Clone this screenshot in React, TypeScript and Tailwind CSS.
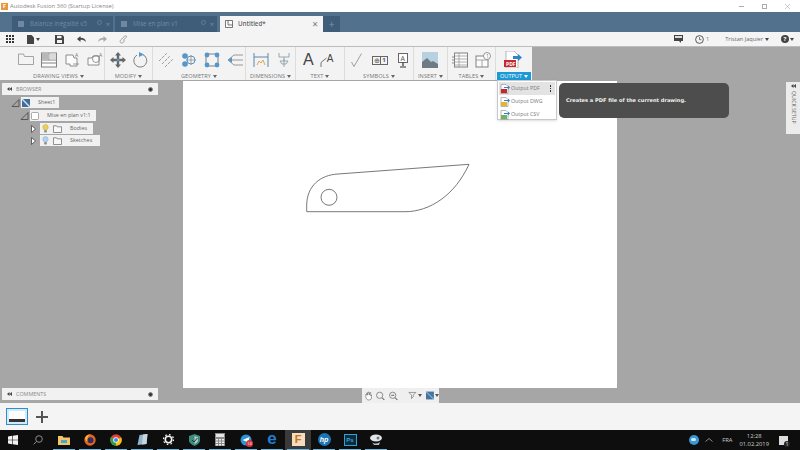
import React from "react";

const font = "font-['Open_Sans','Liberation_Sans',sans-serif]";

// ribbon tools are small drawings, all on a 16x16 box
const Svg = ({ w = 16, h = 16, children }: { w?: number; h?: number; children: React.ReactNode }) => (
    <svg width={w} height={h} viewBox={`0 0 ${w} ${h}`} fill="none" className="block shrink-0 opacity-80">
        {children}
    </svg>
);

const Caret = ({ color = "#555" }: { color?: string }) => (
    <svg width="4" height="3" viewBox="0 0 4 3" className="shrink-0"><path d="M0 0h4L2 3z" fill={color} /></svg>
);

const RibbonGroup = ({ label, width, gap, pl, children, labelPl = "" }: { label: string; width: string; gap: string; pl: string; children?: React.ReactNode; labelPl?: string }) => (
    <div className={`${width} flex flex-col h-full border-r border-[#dcdcdc]`}>
        <div className={`h-[25px] flex items-center ${gap} ${pl} pt-[1px]`}>{children}</div>
        <div className={`h-[8px] flex items-center justify-center gap-[2px] text-[5.6px] text-[#777] tracking-[0.1px] ${labelPl}`}>
            {label}
            <Caret color="#666" />
        </div>
    </div>
);

const TreeChip = ({ width, children }: { width: string; children: React.ReactNode }) => (
    <div className={`${width} h-[11px] bg-[#f1f1f1] flex items-center text-[5.4px] text-[#666]`}>{children}</div>
);

const Tri = () => (
    <svg width="5" height="8" viewBox="0 0 5 8"><path d="M.5.5 4.5 4 .5 7.5z" fill="#fff" stroke="#444" strokeWidth=".8" /></svg>
);
const Corner = () => (
    <svg width="9" height="8" viewBox="0 0 9 8"><path d="M8 .5V7.5H1z" fill="none" stroke="#444" strokeWidth=".8" /></svg>
);
const Bulb = ({ color }: { color: string }) => (
    <svg width="7" height="9" viewBox="0 0 7 9"><circle cx="3.5" cy="3.2" r="2.7" fill={color} stroke="#999" strokeWidth=".4" /><rect x="2.2" y="6.2" width="2.6" height="2.2" fill="#888" /></svg>
);
const Folder = () => (
    <svg width="9" height="8" viewBox="0 0 9 8"><path d="M.5 7.5V.8h3l.7 1h4.3v5.7z" fill="#f8f8f8" stroke="#666" strokeWidth=".7" /></svg>
);

const PanelBar = ({ label }: { label: string }) => (
    <div className="h-[12px] w-[156px] ml-[2px] bg-[#f1f1f1] flex items-center pl-[5px] text-[5.4px] text-[#888]">
        <svg width="5" height="4" viewBox="0 0 5 4" className="mr-[4px]"><path d="M2.500 0v4L0 2zM5 0v4L2.500 2z" fill="#444" /></svg>
        {label}
        <span className="ml-auto mr-[5px] w-[5px] h-[5px] rounded-full bg-[#333] border border-[#888]" />
    </div>
);

const MenuRow = ({ label, color, active }: { label: string; color: string; active?: boolean }) => (
    <div className={`h-[13px] mx-[1px] flex items-center pl-[1px] text-[5.3px] text-[#777] ${active ? "bg-[#e3e3e3]" : ""}`}>
        <svg width="10" height="10" viewBox="0 0 10 10" className="mr-[1px]">
            <path d="M1 .5h5l2 2v7H1z" fill="#fff" stroke="#888" strokeWidth=".6" />
            <rect x="1" y="5" width="6" height="4" fill={color} />
            <path d="M4 3h4V1.500L10 3.500 8 5.500V4H4z" fill="#2e86c8" />
        </svg>
        <span>{label}</span>
        {active && (
            <span className="ml-auto mr-[4px] flex flex-col gap-[1px]">
                <i className="block w-[1.500px] h-[1.500px] bg-[#333]" />
                <i className="block w-[1.500px] h-[1.500px] bg-[#333]" />
                <i className="block w-[1.500px] h-[1.500px] bg-[#333]" />
            </span>
        )}
    </div>
);

const TaskIcon = ({ running, active, first, children }: { running?: boolean; active?: boolean; first?: boolean; children: React.ReactNode }) => (
    <div className={`${first ? "w-[25px]" : "w-[26px]"} h-full px-[2px] ${active ? "bg-[#3a3a3a]" : ""}`}>
        <div className={`h-full flex items-center justify-center border-b ${running ? "border-[#6fb6dc]" : "border-transparent"}`}>
            {children}
        </div>
    </div>
);

const taskIcons = (
    <>
        <TaskIcon first>
            <svg width="10" height="10" viewBox="0 0 10 10"><path d="M0 1.400 4.300.8v3.900H0zM4.900.7 10 0v4.700H4.900zM0 5.300h4.300v3.900L0 8.600zM4.900 5.300H10V10l-5.100-.7z" fill="#f2f2f2" /></svg>
        </TaskIcon>
        <TaskIcon>
            <svg width="10" height="10" viewBox="0 0 10 10" fill="none" stroke="#999" strokeWidth=".9"><circle cx="6" cy="4" r="3.300" /><path d="M3.600 6.400 .6 9.400" /></svg>
        </TaskIcon>
        <TaskIcon running>
            <svg width="12" height="10" viewBox="0 0 12 10"><path d="M0 1h4.500l1 1.500H12V10H0z" fill="#f1c664" /><rect x="3" y="5" width="6" height="3" fill="#4aa3d8" /></svg>
        </TaskIcon>
        <TaskIcon running>
            <svg width="12" height="12" viewBox="0 0 12 12"><circle cx="6" cy="6" r="5.700" fill="#e8641b" /><circle cx="6.500" cy="6.300" r="3" fill="#2b2d6e" /><path d="M1 4c1-3 4-4 6-3.500C5 1 4 2.500 4 3.500 3 4 3 6 3.500 7.500 2 7 1 5.500 1 4z" fill="#f7b32b" /></svg>
        </TaskIcon>
        <TaskIcon running>
            <svg width="12" height="12" viewBox="0 0 12 12"><circle cx="6" cy="6" r="5.800" fill="#dc4437" /><path d="M6 6 11.200 3.500A5.800 5.800 0 0 1 6 11.800z" fill="#f4c20d" /><path d="M6 6 6 11.800A5.800 5.800 0 0 1 .9 3.200z" fill="#2f9e44" /><circle cx="6" cy="6" r="2.800" fill="#fff" /><circle cx="6" cy="6" r="2.100" fill="#4285f4" /></svg>
        </TaskIcon>
        <TaskIcon running>
            <svg width="11" height="11" viewBox="0 0 11 11"><path d="M2.500 1 10.500 0 9.500 10 .5 11z" fill="#8fb6cf" /><path d="M6 .5 10.500 0 9.500 10 5 10.500z" fill="#c9d6de" /></svg>
        </TaskIcon>
        <TaskIcon running>
            <svg width="11" height="11" viewBox="0 0 11 11"><circle cx="5.500" cy="5.500" r="3.200" fill="none" stroke="#f2f2f2" strokeWidth="1.600" /><circle cx="5.500" cy="5.500" r="5" fill="none" stroke="#f2f2f2" strokeWidth="1.300" strokeDasharray="1.600 2.320" /></svg>
        </TaskIcon>
        <TaskIcon running>
            <svg width="11" height="12" viewBox="0 0 11 12"><path d="M5.500 0 11 2v4.500C11 9 8 11 5.500 12 3 11 0 9 0 6.500V2z" fill="#3d8c7a" /><path d="M5.500 2 9 3.200v3C9 8 7 9.300 5.500 10z" fill="#b3c7cc" /><path d="M3 6l2 2 3.500-4" stroke="#17374f" strokeWidth="1" fill="none" /></svg>
        </TaskIcon>
        <TaskIcon running>
            <svg width="10" height="13" viewBox="0 0 10 13"><rect width="10" height="13" fill="#8b8b8b" /><rect x="1" y="1" width="8" height="3" fill="#e6e6e6" /><path d="M1 6h2v1.500H1zM4 6h2v1.500H4zM7 6h2v1.500H7zM1 8.500h2V10H1zM4 8.500h2V10H4zM7 8.500h2V10H7zM1 11h2v1.500H1zM4 11h2v1.500H4zM7 11h2v1.500H7z" fill="#eee" /></svg>
        </TaskIcon>
        <TaskIcon running>
            <div className="relative w-[12px] h-[12px]">
                <svg width="12" height="12" viewBox="0 0 12 12"><circle cx="6" cy="6" r="5.500" fill="#2c92d1" /><path d="M2.500 6 9.500 3 8 9 6 7.500z" fill="#fff" /></svg>
                <span className="absolute left-[6px] top-[6px] w-[7px] h-[7px] rounded-full bg-[#d8343f] text-white text-[4px] leading-[7px] text-center">14</span>
            </div>
        </TaskIcon>
        <TaskIcon running>
            <span className="text-[#1f7fd6] text-[17px] leading-none font-bold font-['Liberation_Sans',sans-serif] -mt-[3px]">e</span>
        </TaskIcon>
        <TaskIcon running active>
            <div className="w-[13px] h-[13px] bg-[#f3dcc0] flex items-center justify-center text-[#c8711b] text-[11px] font-bold leading-none font-['Liberation_Sans',sans-serif]">F</div>
        </TaskIcon>
        <TaskIcon running>
            <div className="w-[13px] h-[13px] rounded-full bg-[#1c74b8] flex items-center justify-center text-white text-[7px] italic font-bold leading-none font-['Liberation_Sans',sans-serif]">hp</div>
        </TaskIcon>
        <TaskIcon running>
            <div className="w-[13px] h-[12px] bg-[#0d2b3b] border border-[#2fa3d6] flex items-center justify-center text-[#35a9dc] text-[6px] font-bold leading-none font-['Liberation_Sans',sans-serif]">Ps</div>
        </TaskIcon>
        <TaskIcon running>
            <svg width="14" height="12" viewBox="0 0 14 12"><ellipse cx="7" cy="4" rx="6" ry="3.500" fill="#e5e5e5" /><path d="M3 8c2 2 5 2 8 0l-1 3H5z" fill="#b8c4cc" /><circle cx="9" cy="4" r="1.500" fill="#5a7d99" /></svg>
        </TaskIcon>
    </>
);

export default function App() {
    return (
        <div className={`w-[800px] h-[450px] overflow-hidden flex flex-col bg-white relative ${font}`}>
            {/* Window title */}
            <div className="h-[12px] flex items-center pl-[1px] text-[5.85px] text-[#888]">
                <div className="w-[7px] h-[7px] bg-[#e9963c] text-white text-[6px] leading-[7px] text-center font-bold mr-[2px]">F</div>
                Autodesk Fusion 360 (Startup License)
                <div className="ml-auto flex items-center gap-[18px] pr-[10px] text-[#999]">
                    <i className="block w-[5px] h-[1px] bg-[#aaa]" />
                    <i className="block w-[5px] h-[5px] border border-[#aaa]" />
                    <svg width="5" height="5" viewBox="0 0 5 5"><path d="M0 0 5 5M5 0 0 5" stroke="#aaa" strokeWidth=".6" /></svg>
                </div>
            </div>

            {/* Tabs */}
            <div className="h-[20px] bg-[#52718d] flex items-end pl-[12px] text-[6.2px]">
                <div className="w-[101px] h-[16px] bg-[#3f5d79] flex items-center pl-[6px] text-[#6f8aa3] mr-[2px]">
                    <i className="w-[6px] h-[6px] bg-[#6f889f] mr-[6px]" />
                    Balance inégalité v5
                    <span className="ml-auto mr-[3px] w-[5px] h-[5px] mb-[4px] rounded-full border border-[#5f7d98]" />
                    <span className="mr-[3px] text-[#6f8aa3] text-[8px] leading-none">×</span>
                </div>
                <div className="w-[102px] h-[16px] bg-[#3f5d79] flex items-center pl-[6px] text-[#6f8aa3] mr-[3px]">
                    <i className="w-[6px] h-[6px] bg-[#6f889f] mr-[6px]" />
                    Mise en plan v1
                    <span className="ml-auto mr-[3px] w-[5px] h-[5px] mb-[4px] rounded-full border border-[#5f7d98]" />
                    <span className="mr-[3px] text-[#6f8aa3] text-[8px] leading-none">×</span>
                </div>
                <div className="w-[103px] h-[16px] bg-[#f4f4f4] flex items-center pl-[5px] text-[#666] font-semibold">
                    <svg width="8" height="8" viewBox="0 0 8 8" className="mr-[5px]"><path d="M.5.500h7v7h-7zM3 .5v4.500h4.500" fill="#fff" stroke="#555" strokeWidth=".8" /></svg>
                    Untitled*
                    <span className="ml-auto mr-[5px] text-[#777] text-[10px] leading-none font-normal">×</span>
                </div>
                <div className="w-[17px] h-[16px] bg-[#3f5d79] flex items-center justify-center text-[#7c95ac] text-[10px] leading-none">+</div>
            </div>

            {/* Quick access bar */}
            <div className="h-[15px] bg-[#f4f4f4] border-b border-[#bdbdbd] flex items-center pl-[6px] text-[5.6px] text-[#666]">
                <svg width="8" height="8" viewBox="0 0 8 8" className="mr-[13px]"><path d="M0 0h2v2H0zM3 0h2v2H3zM6 0h2v2H6zM0 3h2v2H0zM3 3h2v2H3zM6 3h2v2H6zM0 6h2v2H0zM3 6h2v2H3zM6 6h2v2H6z" fill="#333" /></svg>
                <svg width="7" height="9" viewBox="0 0 7 9" className="mr-[2px]"><path d="M0 0h4.500L7 2.500V9H0z" fill="#444" /></svg>
                <span className="mr-[15px]"><Caret color="#444" /></span>
                <svg width="9" height="9" viewBox="0 0 9 9" className="mr-[13px]"><path d="M0 0h7.500L9 1.500V9H0z" fill="#444" /><rect x="2" y=".8" width="4.500" height="2.400" fill="#f4f4f4" /><rect x="2" y="5" width="5" height="3" fill="#f4f4f4" /></svg>
                <svg width="9" height="6" viewBox="0 0 9 6" className="mr-[12px]"><path d="M3.500 0v1.800C6.500 1.800 8.500 3 9 6 7.500 4.300 6 3.800 3.500 3.800V6L0 3z" fill="#444" /></svg>
                <svg width="9" height="6" viewBox="0 0 9 6" className="mr-[12px]"><path d="M5.500 0v1.800C2.500 1.800.5 3 0 6c1.500-1.700 3-2.200 5.500-2.200V6L9 3z" fill="#aaa" /></svg>
                <svg width="9" height="9" viewBox="0 0 9 9" fill="none" stroke="#999" strokeWidth=".9"><path d="M4 5.500 7.700 2A1.200 1.200 0 0 0 6 .8L1.500 5.200a1.700 1.700 0 0 0 2.400 2.400L6 5.500" /></svg>
                <div className="ml-auto flex items-center pr-[6px]">
                    <svg width="9" height="8" viewBox="0 0 9 8" className="mr-[12px]"><path d="M0 0h9v6H7v2L5 6H0z" fill="#444" /><rect x="1" y="1" width="7" height="2" fill="#ddd" /></svg>
                    <svg width="9" height="9" viewBox="0 0 9 9" fill="none" stroke="#444" className="mr-[2px]"><circle cx="4.500" cy="4.500" r="3.900" strokeWidth=".9" /><path d="M4.500 2v2.700h2" strokeWidth=".7" /></svg>
                    <span className="mr-[16px] text-[#777]">1</span>
                    <span className="mr-[2px]">Tristan Jaquier</span>
                    <span className="mr-[12px]"><Caret color="#444" /></span>
                    <div className="w-[8px] h-[8px] rounded-full bg-[#444] text-white text-[6px] leading-[8px] text-center font-bold mr-[1px]">?</div>
                    <Caret color="#444" />
                </div>
            </div>

            {/* Workspace */}
            <div className="flex-1 bg-[#a6a6a6] flex flex-col relative">
                <div className="h-[33px] w-[532px] bg-[#f3f3f3] flex pl-[5px] shrink-0">
                    <RibbonGroup label="DRAWING VIEWS" width="w-[100px]" gap="gap-[7px]" pl="pl-[13px]" labelPl="pl-[8px]">
                        <Svg><path d="M.5 5V2h5l1 2.500h9v8H.5z" stroke="#777" strokeWidth=".8" /></Svg>
                        <Svg><rect x=".5" y="1" width="15" height="14" fill="#fff" stroke="#666" /><path d="M8 1v7M.5 8h15M.5 11h15" stroke="#666" /><rect x="1" y="1.500" width="6.500" height="6" fill="#a9a9a9" /><rect x="8.500" y="1.500" width="6.500" height="6" fill="#d5d5d5" /></Svg>
                        <Svg><path d="M2 3h7l1 3h3v8H6v-2H2z" fill="#fff" stroke="#666" strokeWidth=".9" /><path d="M9 12h6" stroke="#666" strokeWidth=".8" /><text x="11" y="5" fontSize="5" fill="#555">A</text></Svg>
                        <Svg><path d="M1 6h4l1-2h6v9H1z" fill="#fff" stroke="#666" strokeWidth=".9" /><circle cx="9" cy="7" r="3.500" stroke="#666" strokeWidth=".8" /><text x="12" y="5" fontSize="5" fill="#555">A</text></Svg>
                    </RibbonGroup>
                    <RibbonGroup label="MODIFY" width="w-[48px]" gap="gap-[7px]" pl="pl-[5px]">
                        <Svg><path d="M8 0 11 3.500H9.200V6.800H12.500V5L16 8 12.500 11V9.200H9.200V12.500H11L8 16 5 12.500H6.800V9.200H3.500V11L0 8 3.500 5V6.800H6.800V3.500H5z" fill="#444" /><circle cx="8" cy="8" r="1.500" fill="#2e7fc2" /></Svg>
                        <Svg><path d="M9.500 2.500A6.500 6.500 0 1 1 4 3" stroke="#555" strokeWidth=".9" /><path d="M6 0 11 2.500 6 5z" fill="#2e7fc2" /></Svg>
                    </RibbonGroup>
                    <RibbonGroup label="GEOMETRY" width="w-[93px]" gap="gap-[7px]" pl="pl-[5px]">
                        <Svg><path d="M1 9 9 1M4 12 12 4M7 15 15 7" stroke="#7d7d7d" strokeWidth=".9" strokeDasharray="3 1" /></Svg>
                        <Svg><circle cx="4" cy="4" r="2.800" fill="#2e7fc2" /><circle cx="4" cy="12" r="2.800" fill="#2e7fc2" /><circle cx="10" cy="8" r="4" stroke="#2e7fc2" /><path d="M5 8h10M10 3v10" stroke="#555" strokeWidth=".6" /></Svg>
                        <Svg><rect x="2" y="2" width="12" height="12" stroke="#666" /><circle cx="3" cy="3" r="2.400" fill="#2e7fc2" /><circle cx="13" cy="3" r="2.400" fill="#2e7fc2" /><circle cx="3" cy="13" r="2.400" fill="#2e7fc2" /><circle cx="13" cy="13" r="2.400" fill="#2e7fc2" /></Svg>
                        <Svg><path d="M16 3H7L1 8l6 5h9M4 8h12" stroke="#666" strokeWidth=".8" /><path d="M1 8l4-3v6z" fill="#2e7fc2" /></Svg>
                    </RibbonGroup>
                    <RibbonGroup label="DIMENSIONS" width="w-[50px]" gap="gap-[7px]" pl="pl-[7px]">
                        <Svg><path d="M1 1v14M15 1v14M1 5h14" stroke="#35709e" strokeWidth="1" /><path d="M4 13l2-4 2 2 2-3 2 5" stroke="#d98a1e" strokeWidth=".9" /></Svg>
                        <Svg><path d="M3 1v4M13 1v4M3 5h10M8 5v10M4 9h8l-2 3H6z" stroke="#5d7e99" strokeWidth=".8" /><circle cx="8" cy="8" r="1" fill="#d98a1e" /></Svg>
                    </RibbonGroup>
                    <RibbonGroup label="TEXT" width="w-[49px]" gap="gap-[6px]" pl="pl-[7px]">
                        <span className="text-[16px] leading-none text-[#444] font-['Liberation_Sans',sans-serif]">A</span>
                        <div className="flex items-start">
                            <svg width="7" height="10" viewBox="0 0 7 10" className="mt-[3px]"><path d="M1 10V5.500L6.500 1" stroke="#666" strokeWidth=".9" fill="none" /></svg>
                            <span className="text-[10px] leading-none text-[#444] font-['Liberation_Sans',sans-serif]">A</span>
                        </div>
                    </RibbonGroup>
                    <RibbonGroup label="SYMBOLS" width="w-[69px]" gap="gap-[10px]" pl="pl-[6px]">
                        <svg width="11" height="14" viewBox="0 0 11 14"><path d="M.5 9 3 13.500 10.500 .5" stroke="#888" strokeWidth=".8" fill="none" /></svg>
                        <div className="w-[16px] h-[9px] border border-[#666] flex items-center text-[6px] leading-none text-[#555]">
                            <span className="w-[8px] h-full border-r border-[#666] flex items-center justify-center text-[7px]">⊕</span>
                            <span className="flex-1 text-center font-bold">1</span>
                        </div>
                        <svg width="10" height="15" viewBox="0 0 10 15"><rect x=".5" y=".5" width="9" height="9" fill="#fff" stroke="#666" /><text x="2.500" y="7.500" fontSize="7" fill="#555">A</text><path d="M5 9.500V13M2 14h6" stroke="#333" strokeWidth="1.200" /></svg>
                    </RibbonGroup>
                    <RibbonGroup label="INSERT" width="w-[34px]" gap="gap-0" pl="pl-[8px]">
                        <Svg><rect width="16" height="16" fill="#a9c9dc" /><path d="M0 16V10L5 6l4 4 2-1 5 3v4z" fill="#4f5d68" /></Svg>
                    </RibbonGroup>
                    <RibbonGroup label="TABLES" width="w-[48px]" gap="gap-[7px]" pl="pl-[4px]">
                        <Svg><rect x="2.500" y="1" width="13" height="14" fill="#fff" stroke="#666" /><path d="M2.500 4h13M2.500 7h13M2.500 10h13M2.500 13h13M7 1v14" stroke="#777" strokeWidth=".7" /><path d="M0 5h2M0 8h2M0 11h2" stroke="#777" /></Svg>
                        <Svg><rect x="1" y="4" width="12" height="11" fill="#fff" stroke="#666" /><path d="M7 8v7M1 8h12" stroke="#777" strokeWidth=".8" /><circle cx="12" cy="4" r="3.500" fill="#fff" stroke="#666" strokeWidth=".8" /><text x="11" y="6" fontSize="5" fill="#555">1</text></Svg>
                    </RibbonGroup>
                    <div className="flex-1 flex flex-col h-full">
                        <div className="h-[25px] flex items-center pl-[8px]">
                            <svg width="18" height="17" viewBox="0 0 18 17"><path d="M2 0h8l4 4v13H2z" fill="#fff" stroke="#999" strokeWidth=".7" /><rect y="9" width="12" height="7" fill="#c8282d" /><text x="2" y="14.500" fontSize="5" fontWeight="bold" fill="#fff">PDF</text><path d="M9 5h5V3l4 3.500L14 10V8H9z" fill="#2e86c8" /></svg>
                        </div>
                        <div className="h-[8px] bg-[#1b9ad6] text-white text-[5.600px] flex items-center justify-center gap-[2px] mr-[1px] ml-[1px]">
                            OUTPUT
                            <Caret color="#fff" />
                        </div>
                    </div>
                </div>

                <div className="flex mt-[1px]">
                    <div className="w-[183px] pt-[2px]">
                        <PanelBar label="BROWSER" />
                        <div className="flex flex-col gap-[2px] mt-[2px]">
                            <div className="flex items-center pl-[11px] gap-[1px]">
                                <Corner />
                                <TreeChip width="w-[38px]">
                                    <svg width="8" height="8" viewBox="0 0 8 8" className="ml-[1px] mr-[8px]"><rect width="8" height="8" fill="#3e6d9c" /><path d="M0 0 8 8" stroke="#cfe0ee" strokeWidth="1.500" /></svg>
                                    Sheet1
                                </TreeChip>
                            </div>
                            <div className="flex items-center pl-[20px] gap-[1px]">
                                <Corner />
                                <TreeChip width="w-[66px]">
                                    <svg width="8" height="8" viewBox="0 0 8 8" className="ml-[1px] mr-[8px]"><rect x=".5" y=".5" width="7" height="7" rx="1" fill="#fff" stroke="#888" strokeWidth=".7" /></svg>
                                    Mise en plan v1:1
                                </TreeChip>
                            </div>
                            <div className="flex items-center pl-[31px] gap-[4px]">
                                <Tri />
                                <TreeChip width="w-[53px]">
                                    <span className="ml-[2px] mr-[4px] flex"><Bulb color="#f1d23e" /></span>
                                    <Folder />
                                    <span className="ml-[8px]">Bodies</span>
                                </TreeChip>
                            </div>
                            <div className="flex items-center pl-[31px] gap-[4px] -mt-[1px]">
                                <Tri />
                                <TreeChip width="w-[60px]">
                                    <span className="ml-[2px] mr-[4px] flex"><Bulb color="#a9d6f2" /></span>
                                    <Folder />
                                    <span className="ml-[8px]">Sketches</span>
                                </TreeChip>
                            </div>
                        </div>
                    </div>

                    {/* Sheet */}
                    <div className="w-[434px] h-[307px] bg-white shrink-0">
                        <svg width="434" height="307" viewBox="0 0 434 307" fill="none" stroke="#555" strokeWidth="0.8" className="block">
                            <path d="M123.700 130.700V124C124 105 137 94 155 93L286 83.300C272 114 247 130.700 222 130.700Z" />
                            <circle cx="146" cy="116.300" r="8" />
                        </svg>
                    </div>
                </div>

                <div className="flex-1 flex">
                    <div className="w-[183px]"><PanelBar label="COMMENTS" /></div>
                    <div className="w-[434px] flex justify-center">
                        <div className="w-[77px] h-[15px] bg-[#efefef] flex items-center pl-[1px] gap-[4px]">
                            <svg width="9" height="10" viewBox="0 0 9 10" fill="#fff" stroke="#666" strokeWidth=".7" className="ml-[2px]"><path d="M1 5V3l1 1V1.500l1 0V4l.5-3.500h1L5 4l.5-3h1L6.500 5 8 4 7 8.500 5.500 9.500H3L1 7z" /></svg>
                            <svg width="10" height="10" viewBox="0 0 10 10" fill="none" stroke="#666" strokeWidth=".8"><circle cx="4.200" cy="4.200" r="3.600" /><path d="M7 7l2.500 2.500" strokeWidth="1.200" /></svg>
                            <svg width="10" height="10" viewBox="0 0 10 10" fill="none" stroke="#666" strokeWidth=".8"><circle cx="4.200" cy="4.200" r="3.600" /><path d="M2.500 4.200h3.400M7 7l2.500 2.500" strokeWidth="1.200" /></svg>
                            <svg width="10" height="9" viewBox="0 0 10 9" fill="none" stroke="#777" strokeWidth=".8" className="ml-[6px]"><path d="M1 1h8L6 4v2L4 8V4z" /></svg>
                            <span className="-ml-[3px]"><Caret /></span>
                            <svg width="9" height="9" viewBox="0 0 9 9"><rect width="9" height="9" fill="#44749f" /><path d="M0 0 9 9" stroke="#c7d9e8" /></svg>
                            <span className="-ml-[3px]"><Caret /></span>
                        </div>
                    </div>
                </div>

                {/* Output menu */}
                <div className="absolute left-[497px] top-[33px] w-[60px] h-[40px] bg-white border border-[#c8c8c8] shadow-sm pt-[1px] z-10">
                    <MenuRow label="Output PDF" color="#c8282d" active />
                    <MenuRow label="Output DWG" color="#e6b52c" />
                    <MenuRow label="Output CSV" color="#6fb26b" />
                </div>

                {/* Tooltip */}
                <div className="absolute left-[559px] top-[36px] w-[170px] h-[35px] rounded-[5px] bg-[#4d4d4d] flex items-center pl-[7px] text-[#f2f2f2] text-[5.100px] font-bold font-['DejaVu_Sans',sans-serif] z-10">
                    Creates a PDF file of the current drawing.
                </div>

                {/* Quick setup tab */}
                <div className="absolute right-0 top-[35px] w-[14px] h-[52px] bg-[#ececec] flex flex-col items-center pt-[2px] text-[5.200px] text-[#666]">
                    <svg width="5" height="4" viewBox="0 0 5 4" className="mb-[3px]"><path d="M2.500 0v4L0 2zM5 0v4L2.500 2z" fill="#444" /></svg>
                    <span className="[writing-mode:vertical-rl]">QUICK SETUP</span>
                </div>
            </div>

            {/* Sheet strip */}
            <div className="h-[27px] bg-[#f4f4f4] flex items-center pl-[6px] gap-[8px] shrink-0">
                <div className="w-[22px] h-[17px] border border-[#2a8fd0] p-[2px] bg-[#d6e9f5]">
                    <div className="w-full h-full bg-white border-b-[3px] border-[#333]" />
                </div>
                <svg width="12" height="12" viewBox="0 0 12 12"><path d="M5 0h2v5h5v2H7v5H5V7H0V5h5z" fill="#555" /></svg>
            </div>

            {/* Windows taskbar */}
            <div className="h-[20px] bg-[#0e0e0e] flex items-center shrink-0">
                {taskIcons}
                <div className="ml-auto flex items-center text-[#ccc] text-[5.800px]">
                    <div className="relative w-[10px] h-[10px] rounded-full bg-[#3b96d6] mr-[6px]">
                        <span className="absolute left-[2px] top-[3px] w-[5px] h-[3px] rounded-full bg-[#cfe6f5]" />
                    </div>
                    <svg width="8" height="4" viewBox="0 0 8 4" fill="none" stroke="#aaa" strokeWidth=".8" className="mr-[9px]"><path d="M.5 3.500 4 .5 7.500 3.500" /></svg>
                    <span className="mr-[7px]">FRA</span>
                    <div className="flex flex-col items-center leading-[8px] mr-[10px]">
                        <span>12:28</span>
                        <span>01.02.2019</span>
                    </div>
                    <div className="relative w-[9px] h-[9px] bg-[#ddd] mr-[12px]">
                        <span className="absolute -right-[2px] -bottom-[2px] w-[6px] h-[6px] rounded-full bg-[#222] text-white text-[4.500px] leading-[6px] text-center">1</span>
                    </div>
                </div>
            </div>
        </div>
    );
}
